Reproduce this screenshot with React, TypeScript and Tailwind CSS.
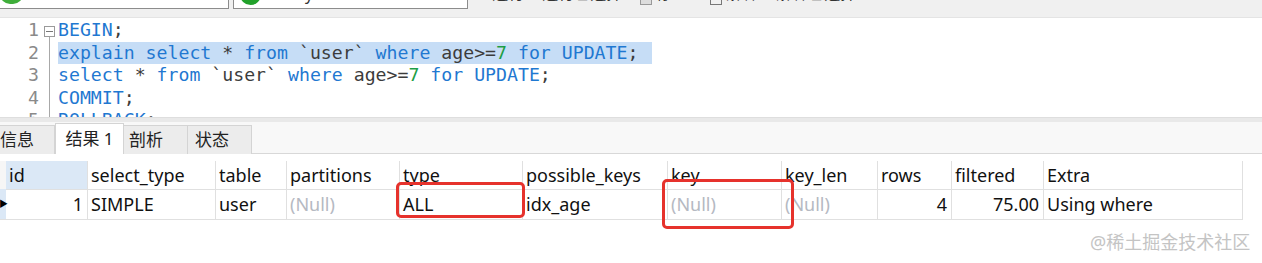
import React from 'react';

const BLUE = 'text-[#1f78d1]';
const DARK = 'text-[#3c3c3c]';
const GREEN = 'text-[#1d9e45]';

type Tok = [string, string];

const code: Tok[][] = [
  [['BEGIN', BLUE], [';', DARK]],
  [
    ['explain select', BLUE], [' * ', DARK], ['from', BLUE], [' `user` ', DARK], ['where', BLUE],
    [' age>=', DARK], ['7', GREEN], [' for UPDATE', BLUE], [';', DARK],
  ],
  [
    ['select', BLUE], [' * ', DARK], ['from', BLUE], [' `user` ', DARK], ['where', BLUE],
    [' age>=', DARK], ['7', GREEN], [' for UPDATE', BLUE], [';', DARK],
  ],
  [['COMMIT', BLUE], [';', DARK]],
  [['ROLLBACK', BLUE], [';', DARK]],
];

const cols = ['id', 'select_type', 'table', 'partitions', 'type', 'possible_keys', 'key', 'key_len', 'rows', 'filtered', 'Extra'];

type Cell = { v: string; right?: boolean; nil?: boolean };
const row: Cell[] = [
  { v: '1', right: true },
  { v: 'SIMPLE' },
  { v: 'user' },
  { v: '(Null)', nil: true },
  { v: 'ALL' },
  { v: 'idx_age' },
  { v: '(Null)', nil: true },
  { v: '(Null)', nil: true },
  { v: '4', right: true },
  { v: '75.00', right: true },
  { v: 'Using where' },
];

const gridCols =
  'grid grid-cols-[6px_82px_128px_71px_113px_123px_145px_114px_96px_74px_92px_199px]';

export default function App() {
  return (
    <div
      className="relative w-[1262px] h-[263px] overflow-hidden bg-white flex flex-col"
      style={{ fontFamily: '"Noto Sans", "Noto Sans CJK SC", sans-serif' }}
    >
      {/* toolbar, cut off at the top */}
      <div className="h-[18px] shrink-0 bg-[#f0f0f0] border-b border-[#e4e4e4] flex items-start overflow-hidden">
        <div className="w-[229px] h-[9px] bg-white border-r border-b border-[#8c8c8c] overflow-hidden">
          <div className="w-[23px] h-[12px] -mt-[8px] rounded-b-[10px] bg-[#3fae3a]" />
        </div>
        <div className="ml-[4px] w-[235px] h-[9px] bg-white border-x border-b border-[#8c8c8c] overflow-hidden flex items-start">
          <div className="ml-[6px] w-[21px] h-[12px] -mt-[7px] rounded-b-full bg-[#21a12a]" />
          <span className="ml-[44px] -mt-[18px] text-[16px] text-[#333]">y</span>
        </div>
        <div className="ml-[12px] flex items-start gap-[18px] -mt-[19px] text-[16px] text-[#333] whitespace-nowrap">
          <span>▸ 运行</span>
          <span>运行已选择</span>
          <span className="flex items-end gap-1">
            <span className="inline-block w-[12px] h-[18px] border border-[#999] bg-[#ddd]" />停
          </span>
          <span className="flex items-end gap-1 ml-[20px]">
            <span className="inline-block w-[12px] h-[18px] border border-[#777]" />解释
          </span>
          <span>解释已选择</span>
        </div>
      </div>

      {/* editor */}
      <div className="h-[99px] shrink-0 flex overflow-hidden pt-[1px]">
        <div className="w-[58px] shrink-0 relative">
          {code.map((_, i) => (
            <div
              key={i}
              className="h-[22.5px] w-[39px] text-right text-[18.2px] leading-[22.5px] text-[#8a8a8a]"
              style={{ fontFamily: '"DejaVu Sans Mono", monospace' }}
            >
              {i + 1}
            </div>
          ))}
          <div className="absolute left-[44px] top-[7px] w-[11px] h-[11px] border border-[#9a9a9a] bg-white flex items-center justify-center">
            <div className="w-[7px] h-[1px] bg-[#777]" />
          </div>
          <div className="absolute left-[49px] top-[18px] bottom-0 w-[1px] bg-[#a8a8a8]" />
        </div>
        <div
          className="flex-1 text-[18.2px] leading-[22.5px] whitespace-pre"
          style={{ fontFamily: '"DejaVu Sans Mono", monospace' }}
        >
          {code.map((line, i) => (
            <div key={i} className="h-[22.5px]">
              <span className={i === 1 ? 'inline-block bg-[#c6ddf6] pr-[14px]' : ''}>
                {line.map(([t, c], j) => (
                  <span key={j} className={c}>
                    {t}
                  </span>
                ))}
              </span>
            </div>
          ))}
        </div>
      </div>

      {/* splitter */}
      <div className="h-[5px] shrink-0 bg-[#e9e9e9] border-t border-[#dedede]" />

      {/* result tabs */}
      <div className="h-[32px] shrink-0 bg-[#f8f8f8] border-b border-[#d8d8d8] flex items-end text-[17px] text-[#222] whitespace-nowrap">
        <div className="w-[55px] h-[29px] bg-[#ececec] border-r border-t border-[#d4d4d4] flex items-center -mb-[1px]">
          信息
        </div>
        <div className="w-[69px] h-[31px] bg-white border-x border-t border-[#d4d4d4] flex items-center justify-center -mb-[1px]">
          结果 1
        </div>
        <div className="w-[64px] h-[29px] bg-[#ececec] border-r border-t border-[#d4d4d4] flex items-center pl-[5px] -mb-[1px]">
          剖析
        </div>
        <div className="w-[64px] h-[29px] bg-[#ececec] border-r border-t border-[#d4d4d4] flex items-center pl-[7px] -mb-[1px]">
          状态
        </div>
      </div>

      {/* grid */}
      <div className="mt-[7px] text-[18px] text-[#111]">
        <div className={`${gridCols} h-[28px]`}>
          <div className="border-b border-[#e0e0e0] bg-[#f6f6f6]" />
          {cols.map((c, i) => (
            <div
              key={c}
              className={`border-r border-b border-[#e0e0e0] pl-[3px] leading-[28px] ${
                i === 0 ? 'bg-[#dbe8f6]' : ''
              }`}
            >
              {c}
            </div>
          ))}
        </div>
        <div className={`${gridCols} h-[30px]`}>
          <div className="border-b border-[#e0e0e0] bg-[#dbe8f6] flex items-center text-[9px] text-black -ml-[1px]">
            ▶
          </div>
          {row.map((c, i) => (
            <div
              key={i}
              className={`border-r border-b border-[#e0e0e0] leading-[30px] ${
                c.right ? 'text-right pr-[4px]' : 'pl-[3px]'
              } ${c.nil ? 'text-[#b5b9c2]' : ''}`}
            >
              {c.v}
            </div>
          ))}
        </div>
      </div>

      {/* annotations */}
      <div className="absolute left-[396px] top-[182px] w-[129px] h-[36px] border-[3px] border-[#e6322c] rounded-[5px]" />
      <div className="absolute left-[662px] top-[179px] w-[132px] h-[50px] border-[3px] border-[#e6322c] rounded-[5px]" />

      <div className="absolute left-[1090px] top-[229px] text-[18px] text-[#c4c4c4] whitespace-nowrap">
        @稀土掘金技术社区
      </div>
    </div>
  );
}
